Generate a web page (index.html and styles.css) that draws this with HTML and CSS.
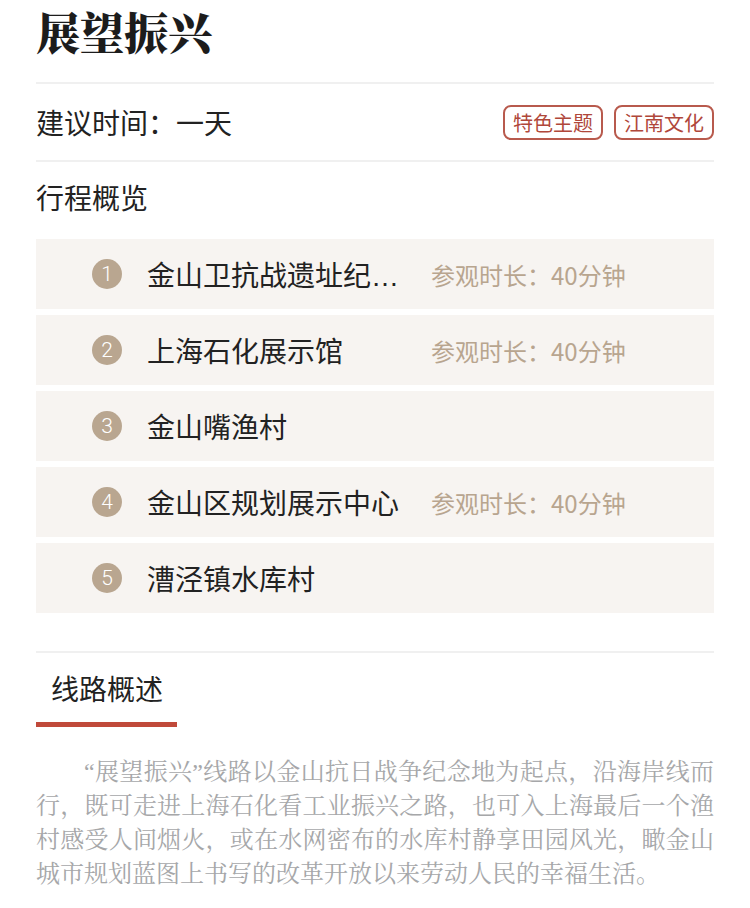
FILE: index.html
```html
<!DOCTYPE html>
<html>
<head>
  <meta charset="utf-8">
  <title>展望振兴</title>
  <link rel="stylesheet" href="styles.css">
</head>
<body>
  <div class="page">
    <h1 class="title">展望振兴</h1>

    <div class="info-row">
      <div class="suggest">建议时间：一天</div>
      <div class="tags">
        <span class="tag">特色主题</span>
        <span class="tag">江南文化</span>
      </div>
    </div>

    <div class="section-title">行程概览</div>

    <ul class="stops">
      <li class="stop">
        <span class="num">1</span>
        <span class="stop-name">金山卫抗战遗址纪念园</span>
        <span class="stop-time">参观时长：40分钟</span>
      </li>
      <li class="stop">
        <span class="num">2</span>
        <span class="stop-name">上海石化展示馆</span>
        <span class="stop-time">参观时长：40分钟</span>
      </li>
      <li class="stop">
        <span class="num">3</span>
        <span class="stop-name">金山嘴渔村</span>
      </li>
      <li class="stop">
        <span class="num">4</span>
        <span class="stop-name">金山区规划展示中心</span>
        <span class="stop-time">参观时长：40分钟</span>
      </li>
      <li class="stop">
        <span class="num">5</span>
        <span class="stop-name">漕泾镇水库村</span>
      </li>
    </ul>

    <div class="tabs">
      <div class="tab active">线路概述</div>
    </div>

    <p class="desc">“展望振兴”线路以金山抗日战争纪念地为起点，沿海岸线而行，既可走进上海石化看工业振兴之路，也可入上海最后一个渔村感受人间烟火，或在水网密布的水库村静享田园风光，瞰金山城市规划蓝图上书写的改革开放以来劳动人民的幸福生活。</p>
  </div>
</body>
</html>
```

FILE: styles.css
```css
body {
  margin: 0;
  background-color: #fff;
  font-family: "Noto Sans CJK SC", "Noto Sans", sans-serif;
  color: #222;
}
.page {
  padding: 0 36px;
  overflow: hidden;
  height: 908px;
  box-sizing: border-box;
}
.title {
  margin: 0;
  font-family: "Noto Serif CJK SC", "Noto Sans CJK SC", serif;
  font-size: 44px;
  font-weight: 900;
  line-height: 62px;
  color: #1c1c1c;
  border-bottom: 2px solid #f0f0f0;
  padding-bottom: 20px;
}
.info-row {
  display: flex;
  align-items: center;
  justify-content: space-between;
  height: 76px;
  border-bottom: 2px solid #f0f0f0;
}
.suggest {
  font-size: 28px;
}
.tags {
  display: flex;
  gap: 11px;
}
.tag {
  font-size: 20px;
  line-height: 31px;
  color: #b0473a;
  border: 2px solid #b85a4d;
  border-radius: 8px;
  padding: 0 8px;
}
.section-title {
  font-size: 28px;
  line-height: 70px;
}
.stops {
  list-style: none;
  margin: 7px 0 0;
  padding: 0;
  display: flex;
  flex-direction: column;
  gap: 6px;
}
.stop {
  display: flex;
  align-items: center;
  height: 70px;
  background-color: #f7f4f1;
  padding-left: 56px;
}
.num {
  width: 30px;
  height: 30px;
  border-radius: 50%;
  background-color: #b9a690;
  color: #fff;
  font-family: Roboto, "Liberation Sans", sans-serif;
  font-weight: 300;
  font-size: 21px;
  line-height: 30px;
  text-align: center;
  flex-shrink: 0;
}
.stop-name {
  font-family: "Liberation Sans", "Noto Sans CJK SC", sans-serif;
  font-size: 28px;
  margin-left: 25px;
  width: 258px;
  white-space: nowrap;
  overflow: hidden;
  text-overflow: ellipsis;
}
.stop-time {
  font-size: 24px;
  color: #b8a58f;
  margin-left: 26px;
}
.tabs {
  margin-top: 38px;
  border-top: 2px solid #f0f0f0;
  padding-top: 15px;
}
.tab {
  display: inline-block;
  font-size: 28px;
  line-height: 40px;
  white-space: nowrap;
  padding: 0 14px 14px 15px;
  border-bottom: 5px solid #c0493a;
}
.desc {
  margin: 28px 0 0;
  font-family: "Liberation Serif", "Noto Serif CJK SC", serif;
  font-size: 24px;
  line-height: 34px;
  text-indent: 2em;
  color: #a6a7a9;
  text-align: justify;
}
```
